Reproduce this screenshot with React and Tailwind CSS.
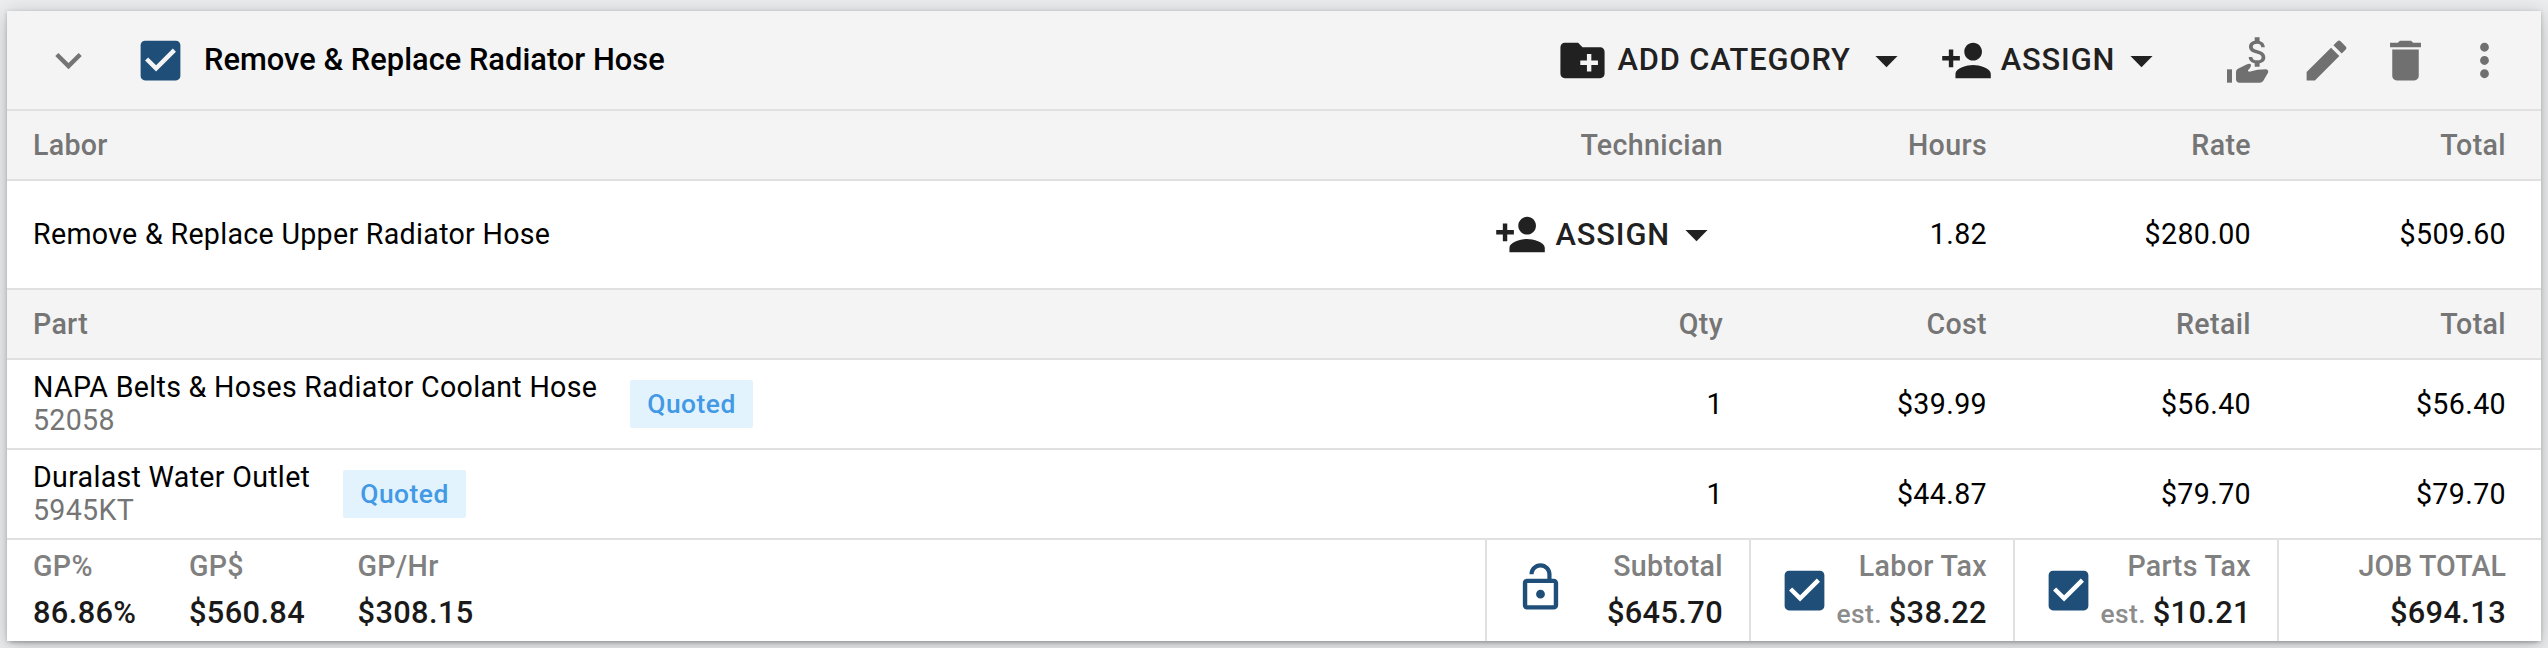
import clsx from 'clsx';

const ICONS = {
  chevron: 'M16.59 8.59L12 13.17 7.41 8.59 6 10l6 6 6-6z',
  checkbox:
    'M19 3H5c-1.11 0-2 .9-2 2v14c0 1.1.89 2 2 2h14c1.11 0 2-.9 2-2V5c0-1.1-.89-2-2-2zm-9 14l-5-5 1.41-1.41L10 14.17l7.59-7.59L19 8l-9 9z',
  folderPlus:
    'M20 6h-8l-2-2H4c-1.11 0-1.99.89-1.99 2L2 18c0 1.11.89 2 2 2h16c1.11 0 2-.89 2-2V8c0-1.11-.89-2-2-2zm-1 8h-3v3h-2v-3h-3v-2h3V9h2v3h3v2z',
  personAdd:
    'M15 12c2.21 0 4-1.79 4-4s-1.79-4-4-4-4 1.79-4 4 1.79 4 4 4zm-9-2V7H4v3H1v2h3v3h2v-3h3v-2H6zm9 4c-2.67 0-8 1.34-8 4v2h16v-2c0-2.66-5.33-4-8-4z',
  caret: 'M7 10l5 5 5-5z',
  edit: 'M3 17.25V21h3.75L17.81 9.94l-3.75-3.75L3 17.25zM20.71 7.04c.39-.39.39-1.02 0-1.41l-2.34-2.34c-.39-.39-1.02-.39-1.41 0l-1.83 1.83 3.75 3.75 1.83-1.83z',
  trash: 'M6 19c0 1.1.9 2 2 2h8c1.1 0 2-.9 2-2V7H6v12zM19 4h-3.5l-1-1h-5l-1 1H5v2h14V4z',
  more: 'M12 8c1.1 0 2-.9 2-2s-.9-2-2-2-2 .9-2 2 .9 2 2 2zm0 2c-1.1 0-2 .9-2 2s.9 2 2 2 2-.9 2-2-.9-2-2-2zm0 6c-1.1 0-2 .9-2 2s.9 2 2 2 2-.9 2-2-.9-2-2-2z',
  unlock:
    'M12 17c1.1 0 2-.9 2-2s-.9-2-2-2-2 .9-2 2 .9 2 2 2zm6-9h-1V6c0-2.76-2.24-5-5-5S7 3.24 7 6h1.9c0-1.71 1.39-3.1 3.1-3.1 1.71 0 3.1 1.39 3.1 3.1v2H6c-1.1 0-2 .9-2 2v10c0 1.1.9 2 2 2h12c1.1 0 2-.9 2-2V10c0-1.1-.9-2-2-2zm0 12H6V10h12v10z',
};

const PARTS = [
  { name: 'NAPA Belts & Hoses Radiator Coolant Hose', number: '52058', status: 'Quoted', qty: '1', cost: '$39.99', retail: '$56.40', total: '$56.40' },
  { name: 'Duralast Water Outlet', number: '5945KT', status: 'Quoted', qty: '1', cost: '$44.87', retail: '$79.70', total: '$79.70' },
];

const PROFIT = [
  { label: 'GP%', value: '86.86%' },
  { label: 'GP$', value: '$560.84' },
  { label: 'GP/Hr', value: '$308.15' },
];

function Icon({ name, className }) {
  return (
    <svg viewBox="0 0 24 24" className={clsx('size-[53px] shrink-0 fill-current', className)}>
      <path d={ICONS[name]} />
    </svg>
  );
}

function HandDollarIcon() {
  return (
    <svg viewBox="-6 -1 192 192" className="size-16 shrink-0 fill-current">
      <path d="M30 123h15v40H30z" />
      <path d="M57 131q0-7 6-10l24-12q14-6 15 1 1 6-9 16-1 4 4 4 24-7 50-7 9 2 6 10l-14 24q-4 6-11 6H68q-11 0-11-11z" />
      <path
        transform="translate(64.1 12.3) scale(4.9)"
        d="M11.8 10.9c-2.27-.59-3-1.2-3-2.15 0-1.09 1.01-1.85 2.7-1.85 1.78 0 2.44.85 2.5 2.1h2.21c-.07-1.72-1.12-3.3-3.21-3.81V3h-3v2.16c-1.94.42-3.5 1.68-3.5 3.61 0 2.31 1.91 3.46 4.7 4.13 2.5.6 3 1.48 3 2.41 0 .69-.49 1.79-2.7 1.79-2.06 0-2.87-.92-2.98-2.1h-2.2c.12 2.19 1.76 3.42 3.68 3.83V21h3v-2.15c1.95-.37 3.5-1.5 3.5-3.55 0-2.84-2.43-3.81-4.7-4.4z"
      />
    </svg>
  );
}

function MenuButton({ icon, label, labelClass, caretClass }) {
  return (
    <button className="flex items-center text-[30.8px] font-medium tracking-[0.88px] text-[#212121]">
      <Icon name={icon} className="mr-2" />
      <span className={labelClass}>{label}</span>
      <Icon name="caret" className={caretClass} />
    </button>
  );
}

function Row({ cells, header, className }) {
  return (
    <div
      className={clsx(
        'grid grid-cols-[1fr_264px_264px_264px_264px] items-center border-b-2 border-[#e0e0e0]',
        header ? 'h-[70px] bg-[#f4f4f4] font-medium text-[#757575]' : 'text-black',
        className
      )}
    >
      {cells.map((cell, i) => (
        <div
          key={i}
          className={clsx(
            'flex items-center',
            i === 0 && 'pl-[26px] tracking-[0.3px]',
            i > 0 && 'justify-end',
            i > 0 && (i < 4 ? 'pr-[26px]' : 'pr-[35px]')
          )}
        >
          {cell}
        </div>
      ))}
    </div>
  );
}

function Summary({ icon, label, value, est, last }) {
  return (
    <div
      className={clsx(
        'flex items-start border-l-2 border-[#e0e0e0]',
        last ? 'pr-[35px]' : 'pr-[26px]',
        icon && 'pl-[27px]'
      )}
    >
      {icon && <Icon name={icon} className={clsx('text-[#1f4e79]', icon === 'unlock' ? 'mt-[21px]' : 'mt-6')} />}
      <div className="ml-auto pt-[3px] text-right font-medium whitespace-nowrap">
        <div className={clsx('leading-[46px] text-[#808080]', last && 'tracking-[0.1px]')}>{label}</div>
        <div className="text-[30.8px] leading-[47px] text-[#1a1a1a]">
          {est && <span className="text-[26.4px] text-[#8c8c8c]">est. </span>}
          {value}
        </div>
      </div>
    </div>
  );
}

export default function App() {
  return (
    <div className="h-[648px] overflow-hidden bg-[#ebedef] px-[7px] pt-[11px] font-[Roboto,sans-serif] text-[28.6px] leading-[33px] tracking-[0.36px]">
      <div className="h-[630px] bg-white shadow-[0_6px_3px_-4px_rgba(0,0,0,0.1),0_1px_4px_rgba(0,0,0,0.2),0_4px_20px_rgba(0,0,0,0.22)]">
        {/* Job header */}
        <div className="flex h-[100px] items-center border-b-2 border-[#e0e0e0] bg-[#f4f4f4] pr-[17px] pl-[35px]">
          <Icon name="chevron" className="text-[#757575]" />
          <Icon name="checkbox" className="ml-[39px] text-[#1f4e79]" />
          <h2 className="ml-[17px] pb-[2px] text-[30.8px] font-medium tracking-[0.03px] text-black">
            Remove &amp; Replace Radiator Hose
          </h2>
          <div className="ml-auto flex items-center gap-[27px]">
            <MenuButton icon="folderPlus" label="ADD CATEGORY" labelClass="pb-[2px]" caretClass="ml-[9px]" />
            <MenuButton icon="personAdd" label="ASSIGN" labelClass="pb-[2px]" />
          </div>
          <div className="ml-[39px] grid grid-cols-[repeat(4,79.2px)] place-items-center text-[#707070]">
            <HandDollarIcon />
            <Icon name="edit" />
            <Icon name="trash" />
            <Icon name="more" />
          </div>
        </div>

        {/* Labor */}
        <Row header cells={['Labor', 'Technician', 'Hours', 'Rate', 'Total']} />
        <Row
          className="h-[109px]"
          cells={[
            'Remove & Replace Upper Radiator Hose',
            <MenuButton icon="personAdd" label="ASSIGN" />,
            '1.82',
            '$280.00',
            '$509.60',
          ]}
        />

        {/* Parts */}
        <Row header cells={['Part', 'Qty', 'Cost', 'Retail', 'Total']} />
        {PARTS.map((p) => (
          <Row
            key={p.number}
            className="h-[90px]"
            cells={[
              <>
                <div>
                  <div>{p.name}</div>
                  <div className="text-[#757575]">{p.number}</div>
                </div>
                <span className="ml-[33px] flex h-12 items-center rounded-[2px] bg-[#e3f3fe] px-[17px] text-[26.4px] font-medium tracking-[0.5px] text-[#4299e6]">
                  {p.status}
                </span>
              </>,
              p.qty,
              p.cost,
              p.retail,
              p.total,
            ]}
          />
        ))}

        {/* Totals */}
        <div className="grid h-[101px] grid-cols-[1fr_264px_264px_264px_264px]">
          <div className="flex gap-[52.5px] pt-[3px] pl-[26px] font-medium">
            {PROFIT.map((g) => (
              <div key={g.label}>
                <div className="leading-[46px] text-[#808080]">{g.label}</div>
                <div className="text-[30.8px] leading-[47px] text-[#1a1a1a]">{g.value}</div>
              </div>
            ))}
          </div>
          <Summary icon="unlock" label="Subtotal" value="$645.70" />
          <Summary icon="checkbox" label="Labor Tax" value="$38.22" est />
          <Summary icon="checkbox" label="Parts Tax" value="$10.21" est />
          <Summary label="JOB TOTAL" value="$694.13" last />
        </div>
      </div>
    </div>
  );
}
